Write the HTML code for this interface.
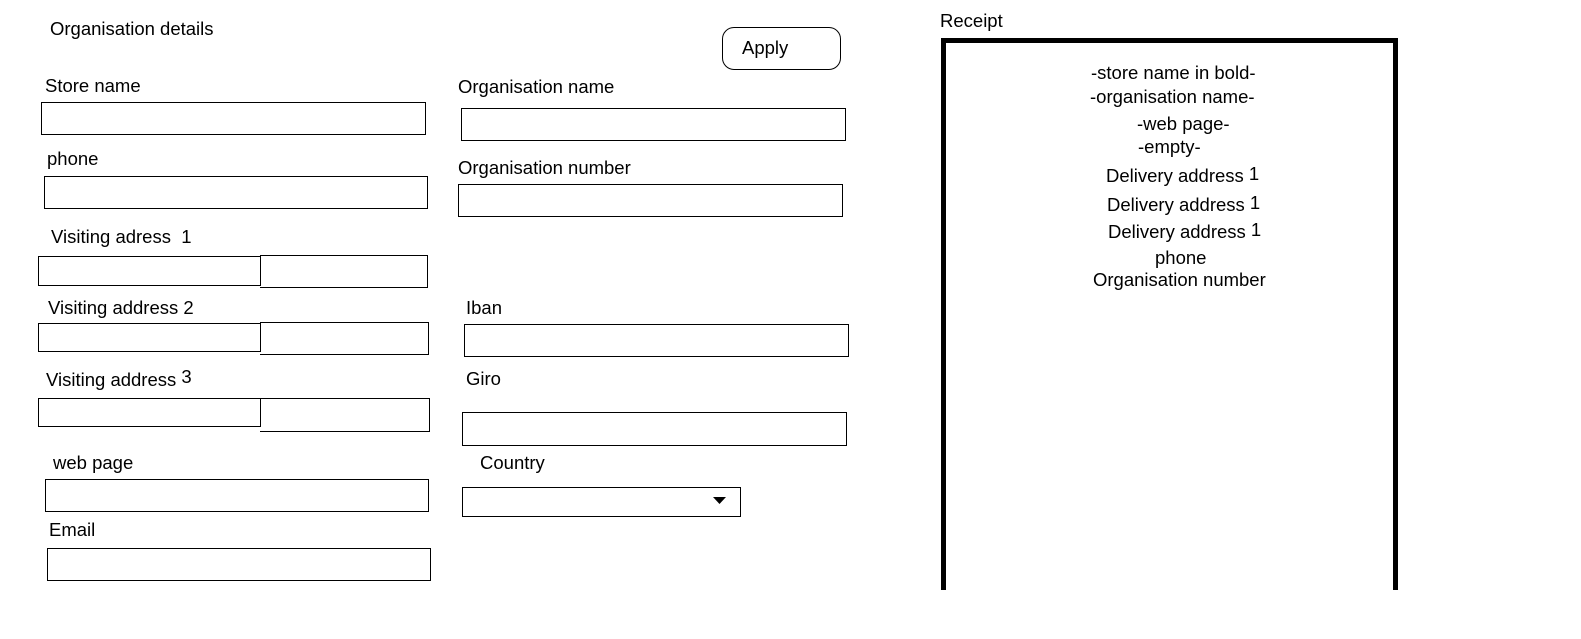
<!DOCTYPE html>
<html><head><meta charset="utf-8"><style>
body{margin:0;width:1581px;height:639px;background:#fff;position:relative;overflow:hidden;font-family:"Liberation Sans",Arial,sans-serif;font-size:18.5px;color:#000}
.t{position:absolute;white-space:nowrap;line-height:21px}
.b{position:absolute;border:1px solid #000;box-sizing:border-box}
</style></head><body>
<div class="t" style="left:50px;top:18px">Organisation details</div>
<div class="b" style="left:722px;top:27px;width:119px;height:43px;border-radius:12px"></div>
<div class="t" style="left:742px;top:37px">Apply</div>

<div class="t" style="left:45px;top:75px">Store name</div>
<div class="b" style="left:41px;top:102px;width:385px;height:33px"></div>
<div class="t" style="left:47px;top:148px">phone</div>
<div class="b" style="left:44px;top:176px;width:384px;height:33px"></div>

<div class="t" style="left:51px;top:226px">Visiting adress&nbsp;&nbsp;1</div>
<div class="b" style="left:38px;top:256px;width:223px;height:30px"></div>
<div class="b" style="left:260px;top:255px;width:168px;height:33px;border-left:none"></div>
<div class="t" style="left:48px;top:297px">Visiting address 2</div>
<div class="b" style="left:38px;top:323px;width:223px;height:29px"></div>
<div class="b" style="left:260px;top:322px;width:169px;height:33px;border-left:none"></div>
<div class="t" style="left:46px;top:369px">Visiting address <span style="position:relative;top:-3px">3</span></div>
<div class="b" style="left:38px;top:398px;width:223px;height:29px"></div>
<div class="b" style="left:260px;top:398px;width:170px;height:34px;border-left:none"></div>

<div class="t" style="left:53px;top:452px">web page</div>
<div class="b" style="left:45px;top:479px;width:384px;height:33px"></div>
<div class="t" style="left:49px;top:519px">Email</div>
<div class="b" style="left:47px;top:548px;width:384px;height:33px"></div>

<div class="t" style="left:458px;top:76px">Organisation name</div>
<div class="b" style="left:461px;top:108px;width:385px;height:33px"></div>
<div class="t" style="left:458px;top:157px">Organisation number</div>
<div class="b" style="left:458px;top:184px;width:385px;height:33px"></div>
<div class="t" style="left:466px;top:297px">Iban</div>
<div class="b" style="left:464px;top:324px;width:385px;height:33px"></div>
<div class="t" style="left:466px;top:368px">Giro</div>
<div class="b" style="left:462px;top:412px;width:385px;height:34px"></div>
<div class="t" style="left:480px;top:452px">Country</div>
<div class="b" style="left:462px;top:487px;width:279px;height:30px"></div>
<svg style="position:absolute;left:713px;top:497px" width="14" height="9"><polygon points="0,0 13,0 6.5,7" fill="#000"/></svg>

<div class="t" style="left:940px;top:10px">Receipt</div>
<div style="position:absolute;left:941px;top:38px;width:447px;height:547px;border:5px solid #000;border-bottom:none"></div>
<div class="t" style="left:1091px;top:62px">-store name in bold-</div>
<div class="t" style="left:1090px;top:86px">-organisation name-</div>
<div class="t" style="left:1137px;top:113px">-web page-</div>
<div class="t" style="left:1138px;top:136px">-empty-</div>
<div class="t" style="left:1106px;top:165px">Delivery address <span style="position:relative;top:-2px">1</span></div>
<div class="t" style="left:1107px;top:194px">Delivery address <span style="position:relative;top:-2px">1</span></div>
<div class="t" style="left:1108px;top:221px">Delivery address <span style="position:relative;top:-2px">1</span></div>
<div class="t" style="left:1155px;top:247px">phone</div>
<div class="t" style="left:1093px;top:269px">Organisation number</div>
</body></html>
